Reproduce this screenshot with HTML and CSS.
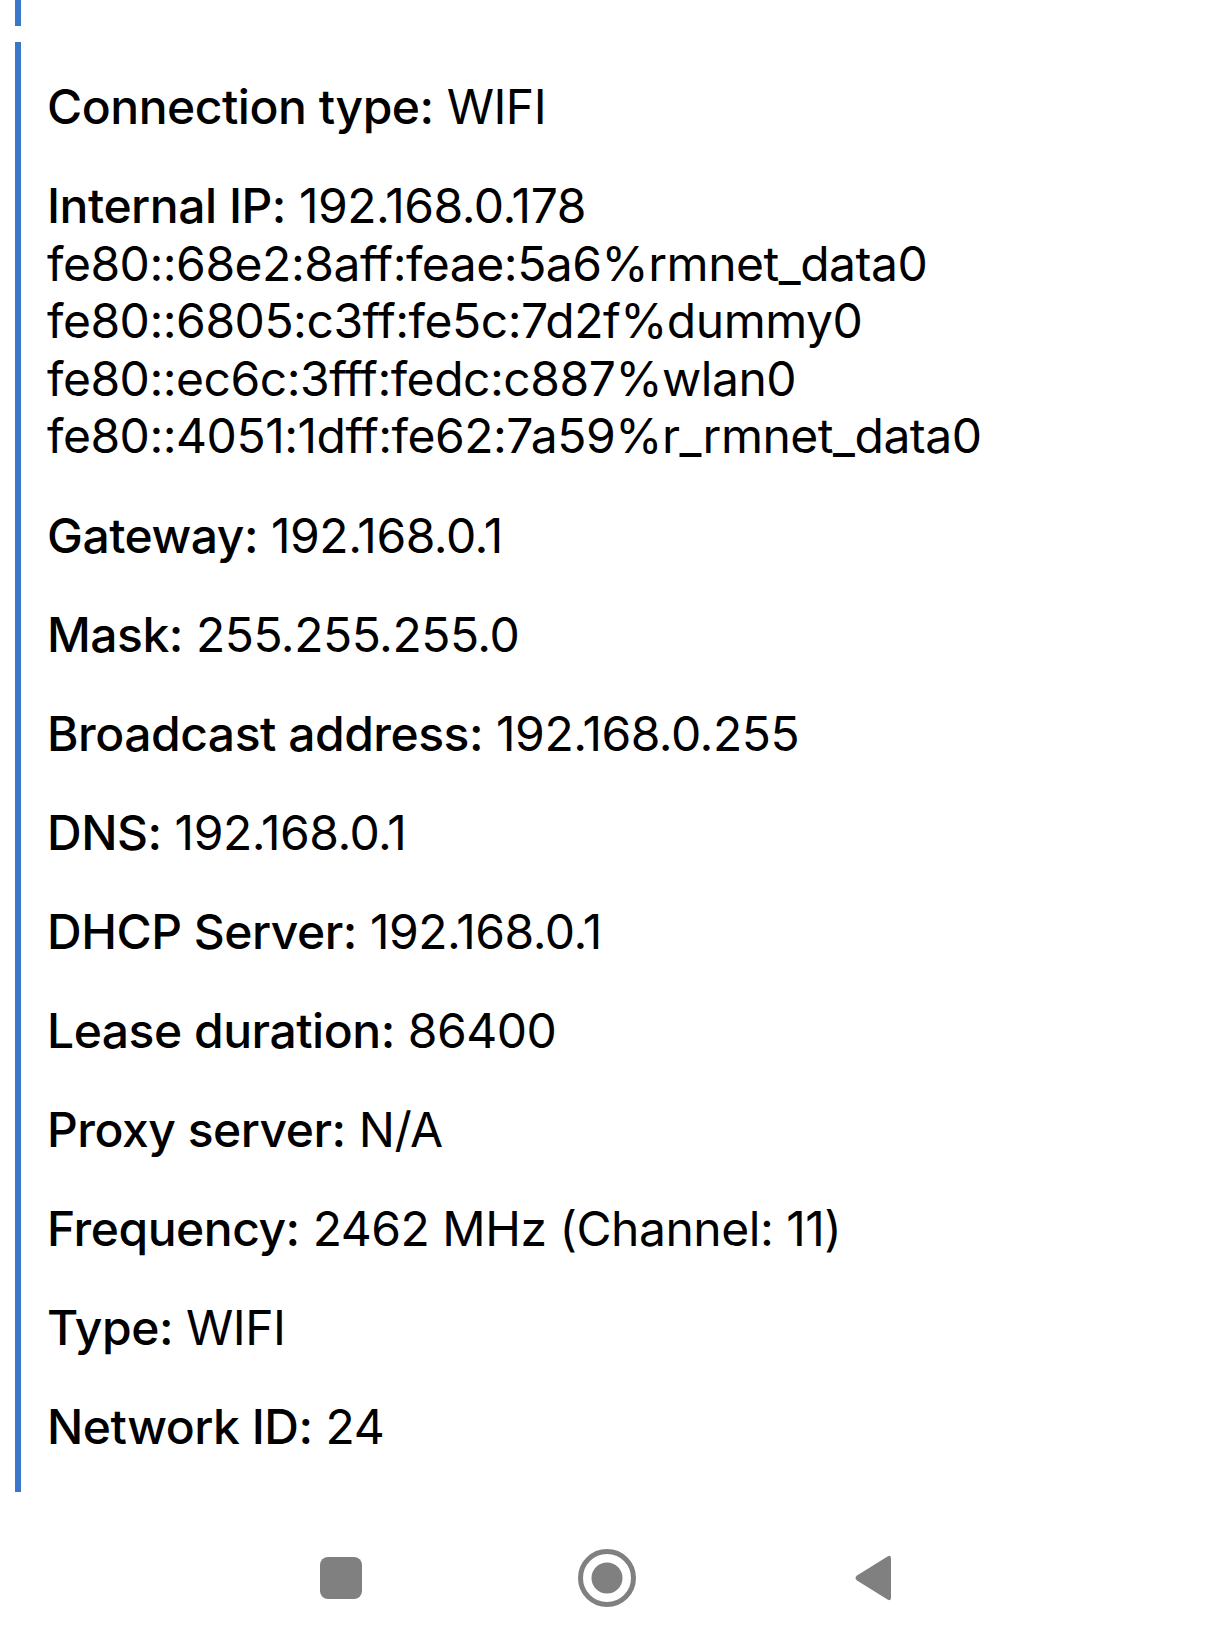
FILE: index.html
```html
<!DOCTYPE html>
<html lang="en">
<head>
<meta charset="utf-8">
<title>Network info</title>
<link rel="stylesheet" href="styles.css">
</head>
<body>
<div class="prev-card"></div>
<section class="card">
  <p class="row"><span class="label">Connection type:</span> WIFI</p>
  <p class="row"><span class="label">Internal IP:</span> 192.168.0.178<br>fe80::68e2:8aff:feae:5a6%rmnet_data0<br>fe80::6805:c3ff:fe5c:7d2f%dummy0<br>fe80::ec6c:3fff:fedc:c887%wlan0<br>fe80::4051:1dff:fe62:7a59%r_rmnet_data0</p>
  <p class="row"><span class="label">Gateway:</span> 192.168.0.1</p>
  <p class="row"><span class="label">Mask:</span> 255.255.255.0</p>
  <p class="row"><span class="label">Broadcast address:</span> 192.168.0.255</p>
  <p class="row"><span class="label">DNS:</span> 192.168.0.1</p>
  <p class="row"><span class="label">DHCP Server:</span> 192.168.0.1</p>
  <p class="row"><span class="label">Lease duration:</span> 86400</p>
  <p class="row"><span class="label">Proxy server:</span> N/A</p>
  <p class="row"><span class="label">Frequency:</span> 2462 MHz (Channel: 11)</p>
  <p class="row"><span class="label">Type:</span> WIFI</p>
  <p class="row"><span class="label">Network ID:</span> 24</p>
</section>
<nav class="navbar">
  <div class="nav-slot">
    <svg class="nav-icon" width="44" height="44" viewBox="0 0 44 44"><rect x="1" y="1" width="42" height="42" rx="8" fill="#808080"/></svg>
  </div>
  <div class="nav-slot">
    <svg class="nav-icon" width="60" height="60" viewBox="0 0 60 60"><circle cx="30" cy="30" r="26.5" fill="none" stroke="#808080" stroke-width="5"/><circle cx="30" cy="30" r="15.5" fill="#808080"/></svg>
  </div>
  <div class="nav-slot">
    <svg class="nav-icon" width="44" height="52" viewBox="0 0 44 52"><path d="M36.5 4.5 Q40 2.5 40 6.5 L40 45.5 Q40 49.5 36.5 47.5 L6 28.5 Q3 26 6 23.5 Z" fill="#808080"/></svg>
  </div>
</nav>
</body>
</html>
```
FILE: styles.css
```css
html, body {
  margin: 0;
  padding: 0;
  background: #ffffff;
}

body {
  font-family: Inter, "Noto Sans", "Liberation Sans", sans-serif;
  color: #000000;
  width: 1220px;
  height: 1649px;
  overflow: hidden;
}

.prev-card {
  margin-left: 15px;
  height: 26px;
  border-left: 6px solid #3a76cc;
}

.card {
  margin: 16px 0 0 15px;
  border-left: 6px solid #3a76cc;
  padding: 36px 0 36px 26px;
  display: flex;
  flex-direction: column;
  gap: 41.5px;
}

.row {
  margin: 0;
  font-size: 48px;
  line-height: 57.6px;
  font-weight: 400;
  letter-spacing: -0.01em;
  white-space: nowrap;
}

.label {
  font-weight: 500;
}

.navbar {
  margin-top: 36px;
  height: 100px;
  padding-left: 208px;
  display: grid;
  grid-template-columns: repeat(3, 266px);
  align-items: center;
}

.nav-slot {
  display: flex;
  justify-content: center;
  align-items: center;
}

.nav-icon {
  display: block;
}
```
